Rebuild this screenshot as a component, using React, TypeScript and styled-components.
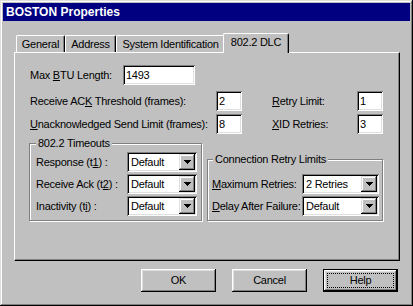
import React from "react";
import styled, { createGlobalStyle } from "styled-components";

const GlobalStyle = createGlobalStyle`
  html, body { margin: 0; padding: 0; background: #c0c0c0; }
  body {
    font-family: "Liberation Sans", Arial, sans-serif;
    font-size: 11px;
    color: #000;
  }
  u { text-decoration-thickness: 1px; text-underline-offset: 1px; }
`;

const sunken = `
  box-shadow: inset 1px 1px #808080, inset -1px -1px #fff, inset 2px 2px #000, inset -2px -2px #dfdfdf;
`;
const raised = `
  box-shadow: inset -1px -1px #000, inset 1px 1px #fff, inset -2px -2px #808080, inset 2px 2px #dfdfdf;
`;

const Window = styled.div`
  box-sizing: border-box;
  width: 413px;
  height: 306px;
  padding: 3px;
  background: #c0c0c0;
  box-shadow: inset -1px -1px #000, inset 1px 1px #dfdfdf, inset -2px -2px #808080, inset 2px 2px #fff;
  display: flex;
  flex-direction: column;
`;

const TitleBar = styled.div`
  height: 18px;
  flex: none;
  background: #000080;
  color: #fff;
  font-weight: bold;
  font-size: 12px;
  padding-left: 3px;
  display: flex;
  align-items: center;
`;

const Body = styled.div`
  flex: 1;
  display: flex;
  flex-direction: column;
  padding: 12px 10px 0 11px;
  letter-spacing: -0.25px;
`;

const TabStrip = styled.div`
  display: flex;
  align-items: flex-end;
  height: 19px;
  padding-left: 2px;
`;

const Tab = styled.div<{ $w: number; $active?: boolean }>`
  box-sizing: border-box;
  position: relative;
  z-index: ${(p) => (p.$active ? 1 : 0)};
  width: ${(p) => p.$w}px;
  height: ${(p) => (p.$active ? 20 : 17)}px;
  margin: ${(p) => (p.$active ? "0 -2px -1px" : "0")};
  padding-top: 2px;
  line-height: 13px;
  text-align: center;
  white-space: nowrap;
  background: #c0c0c0;
  border-top: 1px solid #fff;
  border-left: 1px solid #fff;
  border-right: 1px solid #000;
  border-radius: 2px 2px 0 0;
  box-shadow: inset -1px 0 #808080;
`;

const Panel = styled.div`
  box-sizing: border-box;
  height: 209px;
  border-top: 1px solid #fff;
  border-left: 1px solid #fff;
  border-right: 1px solid #000;
  border-bottom: 1px solid #000;
  box-shadow: inset -1px -1px #808080;
  padding: 12px 0 0 15px;
  display: flex;
  flex-direction: column;
`;

const Row = styled.div`
  display: flex;
  align-items: center;
  height: 20px;
`;

const Label = styled.span<{ $w?: number }>`
  display: inline-block;
  width: ${(p) => (p.$w ? `${p.$w}px` : "auto")};
  line-height: 13px;
  white-space: nowrap;
`;

const FieldGrid = styled.div`
  display: grid;
  grid-template-columns: 186px 26px 30px 85px 26px;
  grid-auto-rows: 20px;
  row-gap: 3px;
  align-items: center;
  margin-top: 6px;
`;

const Field = styled.div<{ $w: number }>`
  box-sizing: border-box;
  width: ${(p) => p.$w}px;
  height: 20px;
  background: #fff;
  ${sunken}
  padding-left: 3px;
  display: flex;
  align-items: center;
  line-height: 13px;
`;

const GroupRow = styled.div`
  display: flex;
  align-items: flex-end;
  gap: 5px;
  margin: 9px 0 0 -1px;
`;

const Group = styled.div<{ $w: number; $pl: number; $pr: number }>`
  box-sizing: border-box;
  width: ${(p) => p.$w}px;
  border: 1px solid #808080;
  box-shadow: inset 1px 1px #fff, 1px 1px #fff;
  padding: 0 ${(p) => p.$pr}px 4px ${(p) => p.$pl}px;
  display: flex;
  flex-direction: column;
  gap: 2px;
`;

const GroupTitle = styled.div<{ $indent: number; $after: number }>`
  align-self: flex-start;
  height: 13px;
  line-height: 13px;
  margin: -7px 0 ${(p) => p.$after}px ${(p) => p.$indent}px;
  padding: 0 2px;
  background: #c0c0c0;
  white-space: nowrap;
`;

const ComboRow = styled.div`
  display: flex;
  align-items: center;
  justify-content: space-between;
  height: 20px;
`;

const Combo = styled.div<{ $w: number }>`
  box-sizing: border-box;
  width: ${(p) => p.$w}px;
  height: 20px;
  padding: 2px;
  background: #fff;
  ${sunken}
  display: flex;
`;

const ComboText = styled.span`
  flex: 1;
  padding-left: 2px;
  display: flex;
  align-items: center;
  line-height: 13px;
  white-space: nowrap;
`;

const DropButton = styled.div`
  box-sizing: border-box;
  width: 16px;
  background: #c0c0c0;
  box-shadow: inset -1px -1px #000, inset 1px 1px #dfdfdf, inset -2px -2px #808080, inset 2px 2px #fff;
  display: flex;
  align-items: center;
  justify-content: center;
`;

const ButtonRow = styled.div`
  display: flex;
  justify-content: flex-end;
  gap: 16px;
  margin-top: 8px;
  padding-right: 2px;
`;

const Button = styled.div<{ $default?: boolean }>`
  box-sizing: border-box;
  width: 75px;
  height: 23px;
  background: #c0c0c0;
  display: flex;
  padding: ${(p) => (p.$default ? "4px" : "0")};
  ${(p) =>
    p.$default
      ? `box-shadow: inset 0 0 0 1px #000, inset -2px -2px #000, inset 2px 2px #fff, inset -3px -3px #808080, inset 3px 3px #dfdfdf;`
      : raised}
`;

const ButtonFace = styled.span<{ $focus?: boolean }>`
  flex: 1;
  display: flex;
  align-items: center;
  justify-content: center;
  line-height: 13px;
  border: 1px dotted ${(p) => (p.$focus ? "#000" : "transparent")};
`;

const Arrow = () => (
  <svg width="7" height="4" viewBox="0 0 7 4" shapeRendering="crispEdges">
    <rect x="0" y="0" width="7" height="1" fill="#000" />
    <rect x="1" y="1" width="5" height="1" fill="#000" />
    <rect x="2" y="2" width="3" height="1" fill="#000" />
    <rect x="3" y="3" width="1" height="1" fill="#000" />
  </svg>
);

const Select = ({ w, value }: { w: number; value: string }) => (
  <Combo $w={w}>
    <ComboText>{value}</ComboText>
    <DropButton>
      <Arrow />
    </DropButton>
  </Combo>
);

export default function App() {
  return (
    <>
      <GlobalStyle />
      <Window>
        <TitleBar>BOSTON Properties</TitleBar>
        <Body>
          <TabStrip>
            <Tab $w={49}>General</Tab>
            <Tab $w={51}>Address</Tab>
            <Tab $w={109}>System Identification</Tab>
            <Tab $w={66} $active>
              802.2 DLC
            </Tab>
          </TabStrip>
          <Panel>
            <Row>
              <Label $w={93}>
                Max <u>B</u>TU Length:
              </Label>
              <Field $w={72}>1493</Field>
            </Row>
            <FieldGrid>
              <Label>
                Receive AC<u>K</u> Threshold (frames):
              </Label>
              <Field $w={26}>2</Field>
              <span />
              <Label>
                <u>R</u>etry Limit:
              </Label>
              <Field $w={26}>1</Field>
              <Label>
                <u>U</u>nacknowledged Send Limit (frames):
              </Label>
              <Field $w={26}>8</Field>
              <span />
              <Label>
                <u>X</u>ID Retries:
              </Label>
              <Field $w={26}>3</Field>
            </FieldGrid>
            <GroupRow>
              <Group $w={173} $pl={6} $pr={4}>
                <GroupTitle $indent={0} $after={0}>
                  802.2 Timeouts
                </GroupTitle>
                <ComboRow>
                  <Label>
                    Response (t<u>1</u>) :
                  </Label>
                  <Select w={70} value="Default" />
                </ComboRow>
                <ComboRow>
                  <Label>
                    Receive Ack (t<u>2</u>) :
                  </Label>
                  <Select w={70} value="Default" />
                </ComboRow>
                <ComboRow>
                  <Label>
                    Inactivity (t<u>i</u>) :
                  </Label>
                  <Select w={70} value="Default" />
                </ComboRow>
              </Group>
              <Group $w={176} $pl={4} $pr={3}>
                <GroupTitle $indent={1} $after={6}>
                  Connection Retry Limits
                </GroupTitle>
                <ComboRow>
                  <Label>
                    <u>M</u>aximum Retries:
                  </Label>
                  <Select w={77} value="2 Retries" />
                </ComboRow>
                <ComboRow>
                  <Label>
                    <u>D</u>elay After Failure:
                  </Label>
                  <Select w={77} value="Default" />
                </ComboRow>
              </Group>
            </GroupRow>
          </Panel>
          <ButtonRow>
            <Button>
              <ButtonFace>OK</ButtonFace>
            </Button>
            <Button>
              <ButtonFace>Cancel</ButtonFace>
            </Button>
            <Button $default>
              <ButtonFace $focus>Help</ButtonFace>
            </Button>
          </ButtonRow>
        </Body>
      </Window>
    </>
  );
}
